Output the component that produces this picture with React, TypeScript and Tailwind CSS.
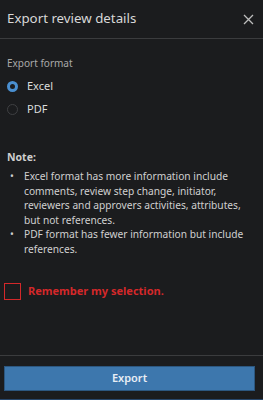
import React from "react";

export default function App() {
  return (
    <div className="w-[263px] h-[400px] bg-[#1b1c1e] flex flex-col text-[#d6d6d6] overflow-hidden" style={{ fontFamily: '"Noto Sans", sans-serif' }}>
      <div className="h-[39px] flex items-center justify-between pl-[7px] pr-[9px] border-b border-[#3b3c3e] shrink-0">
        <span className="text-[13.3px] text-[#d8d8d8]">Export review details</span>
        <svg width="11" height="11" viewBox="0 0 11 11" className="text-[#bdbdbd]">
          <path d="M1 1L10 10M10 1L1 10" stroke="currentColor" strokeWidth="1.3" />
        </svg>
      </div>
      <div className="flex-1 flex flex-col pt-[17px]">
        <div className="px-[7px] text-[10px] text-[#a9a9a9] leading-[14px]">Export format</div>
        <div className="mt-[9px] flex flex-col gap-[9px] pl-[7px]">
          <label className="flex items-center gap-[9px] h-[14px]">
            <span className="w-[11px] h-[11px] rounded-full border-[3px] border-[#4a8fd0] bg-[#1b1c1e]" />
            <span className="text-[11px] text-[#dcdcdc]">Excel</span>
          </label>
          <label className="flex items-center gap-[9px] h-[14px]">
            <span className="w-[11px] h-[11px] rounded-full border border-[#3f4043] bg-[#1b1c1e]" />
            <span className="text-[11px] text-[#dcdcdc]">PDF</span>
          </label>
        </div>
        <div className="mt-[34px] px-[7px]">
          <div className="text-[10.5px] font-bold text-[#cfcfcf] leading-[14px]">Note:</div>
          <ul className="mt-[5px] text-[10.2px] leading-[14.6px] text-[#d0d0d0]">
            <li className="flex">
              <span className="w-[17px] shrink-0 pl-[3px]">•</span>
              <span>Excel format has more information include comments, review step change, initiator, reviewers and approvers activities, attributes, but not references.</span>
            </li>
            <li className="flex">
              <span className="w-[17px] shrink-0 pl-[3px]">•</span>
              <span>PDF format has fewer information but include references.</span>
            </li>
          </ul>
        </div>
        <div className="mt-[26px] pl-[4px] flex items-center gap-[7px]">
          <span className="w-[17px] h-[17px] border border-[#d4282a]" />
          <span className="text-[11px] font-bold text-[#d4282a]">Remember my selection.</span>
        </div>
      </div>
      <div className="border-t border-[#3b3c3e] h-[45px] shrink-0 px-[4px] pt-[8px] border-b border-b-[#27466a]">
        <button className="w-[251px] h-[25px] bg-[#3d77ad] border border-[#2c5780] text-[11px] font-semibold text-[#e8eef5]">Export</button>
      </div>
    </div>
  );
}
